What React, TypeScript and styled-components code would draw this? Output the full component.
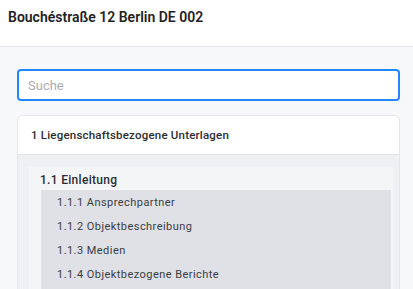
import styled, { createGlobalStyle } from 'styled-components';

const GlobalStyle = createGlobalStyle`
  html, body {
    margin: 0;
    padding: 0;
    background: #f7f8fa;
    font-family: Roboto, "Liberation Sans", Arial, sans-serif;
  }
`;

const sections = [
  {
    title: '1.1 Einleitung',
    items: [
      '1.1.1 Ansprechpartner',
      '1.1.2 Objektbeschreibung',
      '1.1.3 Medien',
      '1.1.4 Objektbezogene Berichte',
    ],
  },
];

function App() {
  return (
    <Page>
      <GlobalStyle />
      <Header>
        <Title>Bouchéstraße 12 Berlin DE 002</Title>
      </Header>
      <Main>
        <SearchInput placeholder="Suche" autoFocus />
        <Card>
          <CardHeader>1 Liegenschaftsbezogene Unterlagen</CardHeader>
          <CardBody>
            {sections.map((section) => (
              <Section key={section.title}>
                <SectionTitle>{section.title}</SectionTitle>
                <ItemList>
                  {section.items.map((item) => (
                    <Item key={item}>{item}</Item>
                  ))}
                </ItemList>
              </Section>
            ))}
          </CardBody>
        </Card>
      </Main>
    </Page>
  );
}

export default App;

const Page = styled.div`
  height: 100vh;
  overflow: hidden;
  background: #f7f8fa;
`;

const Header = styled.header`
  height: 47px;
  padding: 7px 8px 0;
  box-sizing: border-box;
  background: #ffffff;
  border-bottom: 1px solid #e4e6ea;
`;

const Title = styled.h1`
  margin: 0;
  font-size: 14px;
  line-height: 20px;
  font-weight: 600;
  color: #1f2124;
`;

const Main = styled.main`
  padding: 22px 13px 0 17px;
`;

const SearchInput = styled.input`
  display: block;
  width: 100%;
  height: 32px;
  box-sizing: border-box;
  border: 2px solid #2188ff;
  border-radius: 4px;
  padding: 0 9px;
  font-family: inherit;
  font-size: 13px;
  color: #333;
  background: #ffffff;
  outline: none;

  &::placeholder {
    color: #a9adb3;
  }
`;

const Card = styled.section`
  margin-top: 14px;
  background: #eff0f3;
  border: 1px solid #e3e5e9;
  border-radius: 6px;
  overflow: hidden;
`;

const CardHeader = styled.div`
  height: 38px;
  display: flex;
  align-items: center;
  padding: 0 13px;
  background: #ffffff;
  border-bottom: 1px solid #dfe1e5;
  font-size: 11.5px;
  font-weight: 500;
  letter-spacing: 0.2px;
  color: #2b2d31;
`;

const CardBody = styled.div`
  padding: 12px 6px 12px 11px;
`;

const Section = styled.div`
  background: #f4f5f7;
  padding: 3px 2px 12px 12px;
`;

const SectionTitle = styled.div`
  height: 20px;
  display: flex;
  align-items: center;
  margin-left: -1px;
  font-size: 12px;
  font-weight: 500;
  letter-spacing: 0.3px;
  color: #2b2d31;
`;

const ItemList = styled.div`
  background: #dfe1e6;
  padding: 0 0 12px 16px;
`;

const Item = styled.div`
  height: 24px;
  display: flex;
  align-items: center;
  font-size: 11px;
  letter-spacing: 0.45px;
  color: #3a3d42;
`;
